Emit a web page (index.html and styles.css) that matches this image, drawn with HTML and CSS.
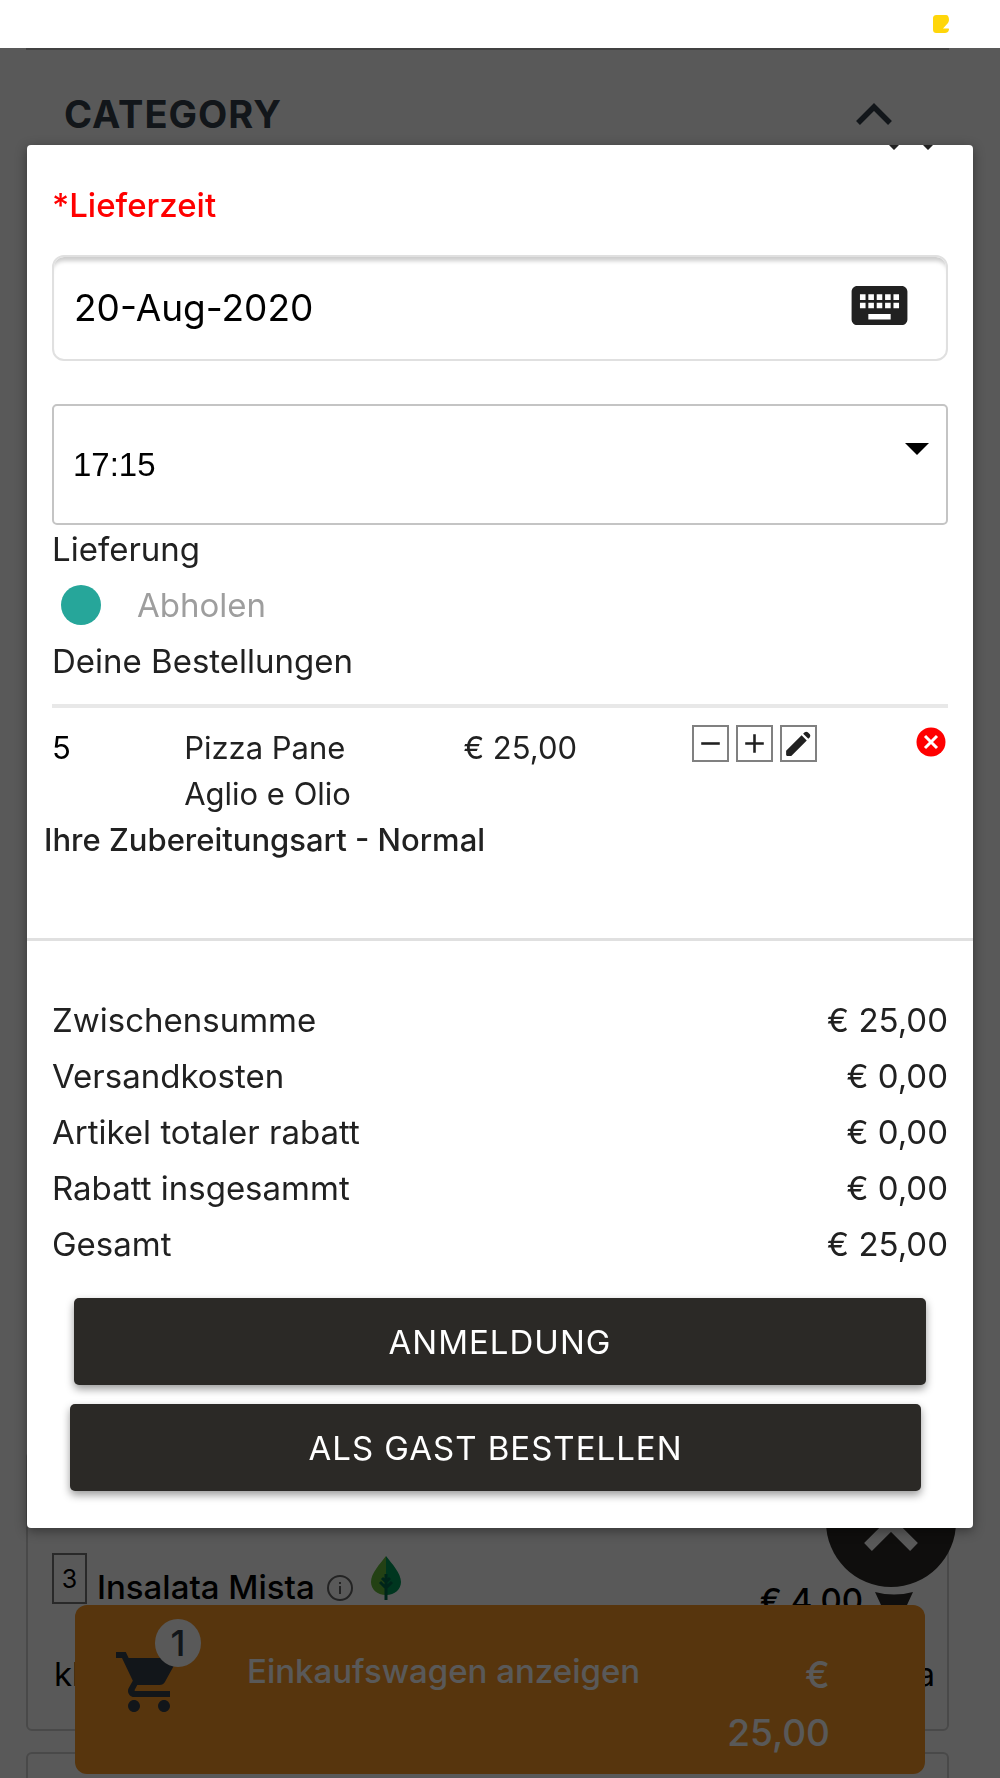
FILE: index.html
```html
<!DOCTYPE html>
<html lang="de">
<head>
    <meta charset="UTF-8">
    <meta name="viewport" content="width=device-width, initial-scale=1.0">
    <title>Bestellung</title>
    <link rel="stylesheet" href="styles.css">
</head>
<body>
    <div class="page">
        <header class="topbar">
            <svg class="topbar-icon" viewBox="0 0 16 18"><path d="M4 0h9c2 0 3 2 3 5 0 1-.5 2-1 3l-5 5.500h5.500c.6 0 .6 1 .3 1.800-.5 1.700-1.800 2.700-3.800 2.700H4c-3 0-4-1-4-4V4c0-3 1-4 4-4z" fill="#ffd60a"/></svg>
        </header>

        <div class="category">
            <h2>CATEGORY</h2>
            <svg class="category-arrow" viewBox="0 0 36 22"><path d="M2 20L18 4l16 16" fill="none" stroke="currentColor" stroke-width="5.500"/></svg>
        </div>

        <main class="menu">
            <article class="menu-card">
                <div class="menu-head">
                    <span class="menu-count">3</span>
                    <h3>Insalata Mista</h3>
                    <svg class="info-icon" viewBox="0 0 26 26"><circle cx="13" cy="13" r="12" fill="none" stroke="#666" stroke-width="2"/><path d="M13 11v8M13 7v2" stroke="#666" stroke-width="2"/></svg>
                    <svg class="leaf-icon" viewBox="0 0 30 44">
                        <path d="M15 0C9 8 0 17 0 26c0 7 6 13 15 13z" fill="#66bb3a"/>
                        <path d="M15 0c6 8 15 17 15 26 0 7-6 13-15 13z" fill="#009a5b"/>
                        <path d="M15 44V18M15 32l-6-6M15 32l6-6M15 26l-4-4M15 26l4-4" fill="none" stroke="#006a4a" stroke-width="3"/>
                    </svg>
                    <div class="menu-price">
                        <span>€ 4,00</span>
                        <svg viewBox="0 0 38 36"><path d="M0 0Q19 5 38 0L26 26H12z" fill="#2b2926"/></svg>
                    </div>
                </div>
                <p class="menu-text"><span>kl</span><span>a</span></p>
            </article>
            <article class="menu-card menu-card-next"></article>
        </main>

        <a class="to-top" href="#" aria-label="Nach oben">
            <svg viewBox="0 0 54 34"><path d="M4 30L27 7l23 23" fill="none" stroke="#fff" stroke-width="11"/></svg>
        </a>

        <a class="cart-bar" href="#">
            <span class="cart-icon">
                <svg viewBox="0 0 24 24"><path d="M7 18c-1.100 0-1.990.9-1.990 2S5.900 22 7 22s2-.9 2-2-.9-2-2-2zM1 2v2h2l3.600 7.590-1.350 2.450c-.16.28-.25.61-.25.96 0 1.100.9 2 2 2h12v-2H7.420c-.14 0-.25-.11-.25-.25l.03-.12.900-1.630h7.450c.75 0 1.410-.41 1.750-1.030l3.580-6.490A1 1 0 0020 4H5.210l-.94-2H1zm16 16c-1.100 0-1.990.9-1.990 2s.89 2 1.990 2 2-.9 2-2-.9-2-2-2z" fill="currentColor"/></svg>
                <span class="cart-badge">1</span>
            </span>
            <span class="cart-label">Einkaufswagen anzeigen</span>
            <span class="cart-total">€<br>25,00</span>
        </a>
    </div>

    <div class="overlay"></div>

    <section class="modal" role="dialog" aria-label="Bestellung">
        <svg class="modal-tips" viewBox="0 0 44 5"><path d="M0 0h10L5 5zM34 0h10L39 5z" fill="#222"/></svg>

        <form class="delivery">
            <label class="delivery-label" for="date">*Lieferzeit</label>
            <div class="date-field">
                <input type="text" id="date" value="20-Aug-2020">
                <button type="button" class="keyboard-btn" aria-label="Tastatur">
                    <svg viewBox="0 0 24 24"><path d="M20 5H4c-1.100 0-1.990.9-1.990 2L2 17c0 1.100.9 2 2 2h16c1.100 0 2-.9 2-2V7c0-1.100-.9-2-2-2zm-9 3h2v2h-2V8zm0 3h2v2h-2v-2zM8 8h2v2H8V8zm0 3h2v2H8v-2zm-1 2H5v-2h2v2zm0-3H5V8h2v2zm9 7H8v-2h8v2zm0-4h-2v-2h2v2zm0-3h-2V8h2v2zm3 3h-2v-2h2v2zm0-3h-2V8h2v2z" fill="currentColor"/></svg>
                </button>
            </div>
            <div class="time-field">
                <select id="time" aria-label="Uhrzeit">
                    <option>17:15</option>
                </select>
                <svg class="time-arrow" viewBox="0 0 24 12"><path d="M0 0h24L12 12z"/></svg>
            </div>
            <div class="options">
                <label for="pickup">Lieferung</label>
                <div class="pickup">
                    <input type="checkbox" id="pickup">
                    <label for="pickup">Abholen</label>
                </div>
                <p>Deine Bestellungen</p>
            </div>
        </form>

        <div class="order">
            <div class="order-row">
                <span class="order-qty">5</span>
                <span class="order-name">Pizza Pane Aglio e Olio</span>
                <span>€ 25,00</span>
                <div class="order-actions">
                    <button type="button" class="btn-box" aria-label="Weniger"><svg viewBox="0 0 32 32"><path d="M7 16h18" stroke="currentColor" stroke-width="2.500"/></svg></button>
                    <button type="button" class="btn-box" aria-label="Mehr"><svg viewBox="0 0 32 32"><path d="M7 16h18M16 7v18" stroke="currentColor" stroke-width="2.500"/></svg></button>
                    <button type="button" class="btn-box" aria-label="Bearbeiten"><svg viewBox="0 0 32 32"><path d="M4 23L19 8l5 5L9 28H5q-1 0-1-1zM20.500 6.500l1.500-1.500q1.500-1 3 0l2 2q1 1.500 0 3L25.500 11.500z" fill="currentColor"/></svg></button>
                    <button type="button" class="btn-remove" aria-label="Entfernen"><svg viewBox="0 0 30 30"><circle cx="15" cy="15" r="14.500" fill="#f00"/><path d="M9 9l12 12M21 9L9 21" stroke="#fff" stroke-width="3"/></svg></button>
                </div>
            </div>
            <p class="order-note">Ihre Zubereitungsart - Normal</p>
        </div>

        <div class="summary">
            <table class="totals">
                <tr><th>Zwischensumme</th><td>€ 25,00</td></tr>
                <tr><th>Versandkosten</th><td>€ 0,00</td></tr>
                <tr><th>Artikel totaler rabatt</th><td>€ 0,00</td></tr>
                <tr><th>Rabatt insgesammt</th><td>€ 0,00</td></tr>
                <tr><th>Gesamt</th><td>€ 25,00</td></tr>
            </table>
            <div class="buttons">
                <button type="button" class="btn">ANMELDUNG</button>
                <button type="button" class="btn btn-guest">ALS GAST BESTELLEN</button>
            </div>
        </div>
    </section>
</body>
</html>
```

FILE: styles.css
```css
:root {
    --text: #212121;
    --dark: #2b2926;
    --navy: #363f4a;
    --border: #e0e0e0;
}

* {
    margin: 0;
    padding: 0;
    box-sizing: border-box;
}

body {
    font-family: Inter, "Liberation Sans", sans-serif;
    font-size: 33px;
    line-height: 48px;
    color: var(--text);
    background: #fff;
}

svg {
    display: block;
}

button {
    border: none;
    background: none;
    color: inherit;
    font: inherit;
    cursor: pointer;
}

/* Page behind the dialog */
.page {
    display: flex;
    flex-direction: column;
    height: 100vh;
    overflow: hidden;
}

.topbar {
    display: flex;
    justify-content: flex-end;
    flex-shrink: 0;
    height: 48px;
    padding: 15px 51px;
}

.topbar-icon {
    width: 16px;
    height: 18px;
}

.category {
    display: flex;
    align-items: center;
    justify-content: space-between;
    margin: 0 51px 0 26px;
    padding: 40px 57px 0 38px;
    border-top: 2px solid #bbb;
    color: var(--navy);
}

.category h2 {
    font-size: 38px;
    line-height: 48px;
    letter-spacing: 1px;
}

.category-arrow {
    width: 36px;
    height: 22px;
}

.menu {
    display: flex;
    flex: 1;
    flex-direction: column;
    justify-content: flex-end;
    gap: 21px;
    padding: 0 51px 0 26px;
}

.menu-card {
    height: 280px;
    padding: 100px 12px 24px 24px;
    border: 2px solid #d0d0d0;
    border-radius: 6px;
    color: #000;
}

.menu-card-next {
    flex-shrink: 0;
    height: 26px;
    padding: 0;
    border-bottom: none;
    border-radius: 6px 6px 0 0;
}

.menu-head {
    display: flex;
    align-items: flex-start;
}

.menu-count {
    width: 35px;
    height: 51px;
    margin-right: 10px;
    border: 2px solid #777;
    font-size: 25px;
    text-align: center;
}

.menu-head h3 {
    padding-top: 10px;
    font-size: 33px;
    font-weight: 500;
}

.info-icon {
    width: 26px;
    height: 26px;
    margin: 22px 18px 0 12px;
}

.leaf-icon {
    width: 30px;
    height: 44px;
    margin-top: 3px;
}

.menu-price {
    display: flex;
    gap: 12px;
    margin: 22px 22px 0 auto;
    font-weight: 500;
}

.menu-price svg {
    width: 38px;
    height: 36px;
    margin-top: 17px;
}

.menu-text {
    display: flex;
    justify-content: space-between;
    padding: 22px 0 0 2px;
}

.to-top {
    position: fixed;
    right: 44px;
    bottom: 191px;
    display: flex;
    align-items: center;
    justify-content: center;
    width: 130px;
    height: 130px;
    padding-top: 24px;
    border-radius: 50%;
    background: var(--dark);
}

.to-top svg {
    width: 54px;
    height: 34px;
}

.cart-bar {
    position: fixed;
    right: 75px;
    bottom: 4px;
    left: 75px;
    display: flex;
    align-items: flex-start;
    padding: 41px 95px 12px 38px;
    border-radius: 12px;
    background: #f99725;
    color: #fff;
    text-decoration: none;
}

.cart-icon {
    position: relative;
    color: var(--navy);
}

.cart-icon svg {
    width: 72px;
    height: 72px;
}

.cart-badge {
    position: absolute;
    top: -27px;
    right: -16px;
    width: 46px;
    height: 48px;
    border-radius: 50%;
    background: #fff;
    font-size: 36px;
    font-weight: 500;
    text-align: center;
}

.cart-label {
    margin-left: 62px;
    font-weight: 500;
}

.cart-label,
.menu-price {
    line-height: 50px;
}

.cart-total {
    margin-left: auto;
    font-size: 37px;
    font-weight: 500;
    line-height: 58px;
    text-align: right;
}

.overlay {
    position: fixed;
    top: 48px;
    right: 0;
    bottom: 0;
    left: 0;
    background: rgba(0, 0, 0, 0.65);
}

/* Dialog */
.modal {
    position: absolute;
    top: 145px;
    right: 27px;
    left: 27px;
    padding: 32px 0 37px;
    border-radius: 4px;
    background: #fff;
    box-shadow: 0 3px 12px rgba(0, 0, 0, 0.4);
}

.modal-tips {
    position: absolute;
    top: 0;
    right: 40px;
    width: 44px;
    height: 5px;
}

.delivery,
.order-row,
.totals {
    margin: 0 25px;
}

.delivery-label {
    display: block;
    color: #f00;
    font-weight: 500;
    line-height: 56px;
}

.date-field {
    display: flex;
    align-items: center;
    height: 106px;
    margin-top: 22px;
    padding: 0 33px 0 20px;
    border: 2px solid var(--border);
    border-radius: 12px;
    box-shadow: inset 0 7px 4px -3px rgba(0, 0, 0, 0.2);
}

.date-field input {
    flex: 1;
    min-width: 0;
    border: none;
    outline: none;
    background: none;
    color: #000;
    font: inherit;
    font-size: 37px;
}

.keyboard-btn svg {
    width: 67px;
    height: 67px;
}

.keyboard-btn {
    margin-bottom: 6px;
}

.time-field {
    position: relative;
    margin-top: 43px;
}

.time-field select {
    display: block;
    width: 100%;
    height: 121px;
    padding: 0 19px;
    border: 2px solid #c4c4c4;
    border-radius: 5px;
    appearance: none;
    background: #fff;
    color: #000;
    font-family: "Liberation Sans", sans-serif;
    font-size: 33px;
}

.time-arrow {
    position: absolute;
    top: 39px;
    right: 19px;
    width: 24px;
    height: 12px;
    pointer-events: none;
}

.options {
    display: flex;
    flex-direction: column;
    gap: 8px;
    padding-bottom: 19px;
    border-bottom: 4px solid #e8e8e8;
}

.pickup {
    display: flex;
    align-items: center;
    gap: 36px;
    padding-left: 9px;
    color: #9e9e9e;
}

.pickup input {
    width: 40px;
    height: 40px;
    border-radius: 50%;
    appearance: none;
    background: #26a69a;
}

.order {
    padding: 17px 0 75px;
    border-bottom: 3px solid var(--border);
    font-size: 31px;
    line-height: 46px;
}

.order-row {
    display: grid;
    grid-template-columns: 132fr 279fr 228fr 256fr;
}

.order-qty {
    color: #000;
}

.order-name {
    padding-right: 80px;
}

.order-actions {
    display: flex;
    gap: 7px;
}

.btn-box {
    width: 37px;
    height: 37px;
    border: 2px solid #808080;
}

.btn-remove {
    width: 30px;
    height: 30px;
    margin: 2px 2px 0 auto;
}

.order-note {
    padding: 0 17px;
    font-weight: 500;
}

.summary {
    padding-top: 51px;
}

.totals {
    width: calc(100% - 50px);
    border-collapse: collapse;
    line-height: 56px;
}

.totals th {
    font-weight: 400;
    text-align: left;
}

.totals td {
    text-align: right;
}

.buttons {
    display: flex;
    flex-direction: column;
    gap: 19px;
    padding: 26px 47px 0;
}

.btn {
    height: 87px;
    border-radius: 5px;
    background: var(--dark);
    box-shadow: 0 4px 8px rgba(0, 0, 0, 0.4);
    color: #fff;
    letter-spacing: 1px;
}

.btn-guest {
    margin: 0 5px 0 -4px;
}
```
